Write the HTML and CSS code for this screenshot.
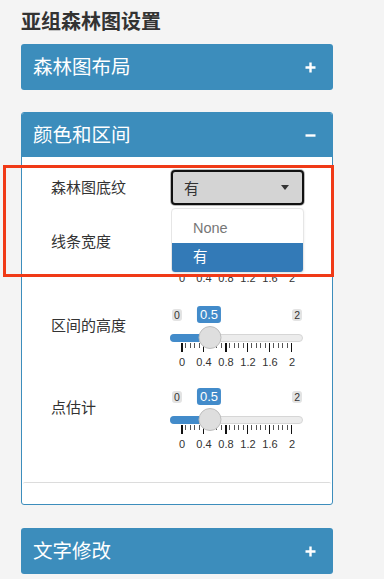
FILE: index.html
```html
<!DOCTYPE html>
<html lang="zh-CN">
<head>
  <meta charset="UTF-8">
  <title>亚组森林图设置</title>
  <meta name="viewport" content="width=device-width, initial-scale=1.0">
  <link rel="stylesheet" href="styles.css">
</head>
<body>

  <div class="sidebar">
    <h3 class="title">亚组森林图设置</h3>

    <div class="box">
      <div class="box-header">
        <span>森林图布局</span>
        <svg class="tool" width="11" height="11" viewBox="0 0 11 11"><path d="M5.5 0.5v10M0.5 5.5h10" stroke="#fff" stroke-width="2.4"/></svg>
      </div>
    </div>

    <div class="box open">
      <div class="box-header">
        <span>颜色和区间</span>
        <svg class="tool" width="11" height="11" viewBox="0 0 11 11"><path d="M0.5 5.5h10" stroke="#fff" stroke-width="2.4"/></svg>
      </div>
      <div class="box-body">
        <div class="form">

          <div class="form-row select-row">
            <label>森林图底纹</label>
            <div class="select-wrap">
              <div class="select">有<span class="caret"></span></div>
              <ul class="dropdown">
                <li>None</li>
                <li class="active">有</li>
              </ul>
            </div>
          </div>

          <div class="form-row under-menu">
            <label>线条宽度</label>
            <div class="slider" style="--pos: 39px">
              <div class="slider-top">
                <div class="slider-minmax"><span>0</span><span>2</span></div>
                <span class="slider-value">0.5</span>
              </div>
              <div class="slider-track"><div class="slider-fill"></div><span class="slider-handle"></span></div>
              <div class="slider-ticks"></div>
              <div class="slider-grid"><span>0</span><span>0.4</span><span>0.8</span><span>1.2</span><span>1.6</span><span>2</span></div>
            </div>
          </div>

          <div class="form-row after-menu">
            <label>区间的高度</label>
            <div class="slider" style="--pos: 39px">
              <div class="slider-top">
                <div class="slider-minmax"><span>0</span><span>2</span></div>
                <span class="slider-value">0.5</span>
              </div>
              <div class="slider-track"><div class="slider-fill"></div><span class="slider-handle"></span></div>
              <div class="slider-ticks"></div>
              <div class="slider-grid"><span>0</span><span>0.4</span><span>0.8</span><span>1.2</span><span>1.6</span><span>2</span></div>
            </div>
          </div>

          <div class="form-row">
            <label>点估计</label>
            <div class="slider" style="--pos: 39px">
              <div class="slider-top">
                <div class="slider-minmax"><span>0</span><span>2</span></div>
                <span class="slider-value">0.5</span>
              </div>
              <div class="slider-track"><div class="slider-fill"></div><span class="slider-handle"></span></div>
              <div class="slider-ticks"></div>
              <div class="slider-grid"><span>0</span><span>0.4</span><span>0.8</span><span>1.2</span><span>1.6</span><span>2</span></div>
            </div>
          </div>

        </div>
        <div class="box-foot"></div>
      </div>
    </div>

    <div class="box">
      <div class="box-header">
        <span>文字修改</span>
        <svg class="tool" width="11" height="11" viewBox="0 0 11 11"><path d="M5.5 0.5v10M0.5 5.5h10" stroke="#fff" stroke-width="2.4"/></svg>
      </div>
    </div>
  </div>

  <div class="highlight"></div>

</body>
</html>
```

FILE: styles.css
```css
body {
  margin: 0;
  background: #f4f4f4;
  font-family: "Liberation Sans", "Noto Sans CJK SC", sans-serif;
  color: #333;
}

.sidebar {
  width: 312px;
  padding: 10px 0 0 21px;
}

.title {
  margin: 0 0 10px;
  font-size: 20px;
  line-height: 24px;
  font-weight: bold;
  color: #333;
}

.box {
  background: #fff;
  border-radius: 3px;
  margin-bottom: 22px;
}

.box-header {
  height: 46px;
  display: flex;
  justify-content: space-between;
  align-items: center;
  padding: 0 17px 0 12px;
  background: #3c8dbc;
  color: #fff;
  font-size: 19.5px;
  border-radius: 3px;
}

.box-header span {
  margin-top: -3px;
}

.box.open {
  border: 1px solid #3c8dbc;
  margin-bottom: 23px;
}

.box.open .box-header {
  height: 44px;
  padding: 0 16px 0 11px;
  border-radius: 2px 2px 0 0;
}

.box-body {
  padding-top: 13px;
}

.form {
  padding: 0 27px 0 29px;
}

.form-row {
  display: grid;
  grid-template-columns: 120px 133px;
  margin-top: 19px;
}

.form-row.under-menu {
  margin-top: 17px;
}

.form-row.after-menu {
  margin-top: 21px;
}

.form-row label {
  font-size: 15px;
  line-height: 20px;
  padding-top: 10px;
  color: #333;
}

.select-row {
  margin-top: 0;
  align-items: center;
  position: relative;
  z-index: 2;
}

.select-row label {
  padding-top: 0;
}

.select-wrap {
  position: relative;
}

.select {
  height: 35px;
  box-sizing: border-box;
  display: flex;
  align-items: center;
  justify-content: space-between;
  padding: 0 13px 0 11px;
  background: #d4d4d4;
  border: 2px solid #111;
  border-radius: 4px;
  box-shadow: 0 0 0 1px #bbb;
  font-size: 15px;
  color: #333;
}

.caret {
  width: 0;
  height: 0;
  border-top: 5px solid #333;
  border-left: 4px solid transparent;
  border-right: 4px solid transparent;
}

.dropdown {
  position: absolute;
  top: 38px;
  left: 0;
  right: 0;
  margin: 0;
  padding: 5px 0 0;
  list-style: none;
  background: #fff;
  border: 1px solid #e6e6e6;
  border-radius: 4px;
  box-shadow: -3px 0 0 #fff, 0 1px 3px rgba(0, 0, 0, 0.08);
  overflow: hidden;
}

.dropdown li {
  height: 29px;
  line-height: 29px;
  padding-left: 21px;
  font-size: 14.5px;
  color: #777;
}

.dropdown li.active {
  background: #337ab7;
  color: #fff;
}

/* slider */
.slider {
  width: 133px;
  height: 63px;
  margin-left: -1px;
}

.slider-top {
  position: relative;
  height: 28px;
}

.slider-minmax {
  display: flex;
  justify-content: space-between;
  padding: 3px 1px 0 2px;
}

.slider-minmax span {
  font-size: 10.5px;
  line-height: 12px;
  padding: 0 2px;
  background: #e3e3e3;
  border-radius: 3px;
  color: #333;
}

.slider-value {
  position: absolute;
  top: 0;
  left: var(--pos);
  transform: translateX(-50%);
  padding: 0 3px;
  font-size: 13px;
  line-height: 17px;
  color: #fff;
  background: #428bca;
  border-radius: 3px;
}

.slider-track {
  position: relative;
  height: 8px;
  box-sizing: border-box;
  background: #ececec;
  border: 1px solid #d6d6d6;
  border-radius: 4px;
}

.slider-fill {
  width: var(--pos);
  height: 8px;
  margin: -1px 0 0 -1px;
  background: #428bca;
  border-radius: 4px 0 0 4px;
}

.slider-handle {
  position: absolute;
  top: -9px;
  left: var(--pos);
  width: 23px;
  height: 23px;
  box-sizing: border-box;
  transform: translateX(-50%);
  background: #dedede;
  border: 1px solid #bdbdbd;
  border-radius: 50%;
}

.slider-ticks {
  height: 9px;
  width: 111px;
  margin: 1px 0 0 11px;
  background:
    repeating-linear-gradient(to right, #111 0 1.5px, transparent 1.5px 22px) 0 0 / 111px 9px no-repeat,
    repeating-linear-gradient(to right, #555 0 1px, transparent 1px 4.4px) 0 0 / 111px 5px no-repeat;
}

.slider-grid {
  display: grid;
  grid-template-columns: repeat(6, 22px);
  margin: 3px 0 0 1px;
  font-size: 11px;
  line-height: 14px;
  text-align: center;
  color: #333;
}

.box-foot {
  margin: 31px 1px 0;
  height: 21px;
  border-top: 1px solid #dcdcdc;
  border-radius: 2px;
}

.highlight {
  position: absolute;
  top: 165px;
  left: 3px;
  width: 325px;
  height: 106px;
  border: 3px solid #f03a17;
  z-index: 3;
}
```
